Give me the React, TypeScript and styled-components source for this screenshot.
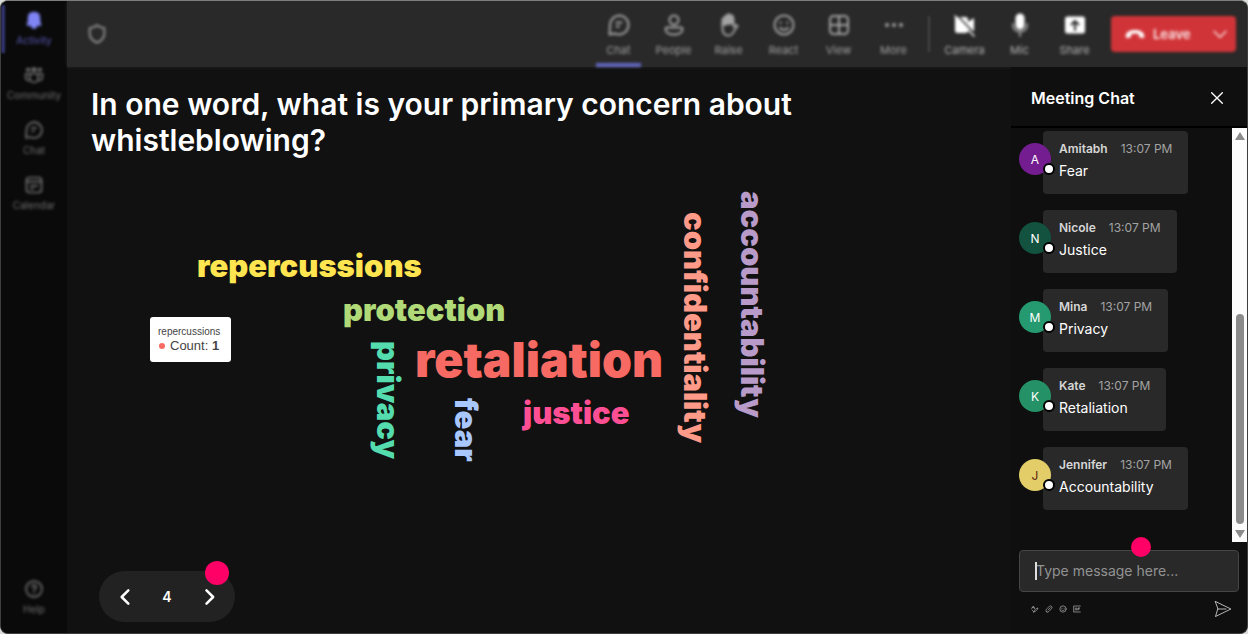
import React from "react";
import styled, { createGlobalStyle, css } from "styled-components";

const GlobalStyle = createGlobalStyle`
  *, *::before, *::after { box-sizing: border-box; }
  body { margin: 0; background: #d9dcd9; font-family: Inter, "Liberation Sans", sans-serif; color: #fff; }
  button { font: inherit; color: inherit; background: none; border: 0; padding: 0; cursor: pointer; }
`;

const softFocus = css`filter: blur(1.5px);`;

const Window = styled.div`
  display: flex;
  height: 100vh;
  border: 1px solid #3c3f3c;
  border-top-color: #7c807c;
  border-radius: 8px;
  background: #111;
  overflow: hidden;
`;

const Rail = styled.nav`
  display: flex;
  flex-direction: column;
  flex: none;
  width: 66px;
  gap: 10px;
  padding: 1px 0 17px;
  background: #0a0a0a;
`;

const RailItem = styled.button<{ $active?: boolean; $last?: boolean }>`
  position: relative;
  display: flex;
  flex-direction: column;
  align-items: center;
  gap: 3px;
  width: 100%;
  height: 45px;
  padding-top: 8px;
  font-size: 10px;
  line-height: 14px;
  color: #707070;
  svg, span { ${softFocus} }
  ${(p) => p.$last && css`margin-top: auto;`}
  ${(p) => p.$active && css`
    color: #5759b4;
    svg { color: #7f85f5; }
    &::before {
      content: "";
      position: absolute;
      left: 0;
      top: 3px;
      width: 4px;
      height: 48px;
      background: #34366f;
      filter: blur(1px);
    }
  `}
`;

const Body = styled.div`
  display: flex;
  flex-direction: column;
  flex: 1;
  min-width: 0;
`;

const Toolbar = styled.header`
  display: flex;
  align-items: center;
  flex: none;
  height: 66px;
  padding: 0 11px 0 19px;
  background: #292929;
  box-shadow: 0 0 3px #292929;
`;

const ShieldSlot = styled.span`
  display: flex;
  margin-right: auto;
  color: #959595;
  ${softFocus}
`;

const Tools = styled.div`
  display: flex;
  gap: 10px;
  height: 100%;
`;

const Tool = styled.button<{ $active?: boolean; $bright?: boolean }>`
  display: flex;
  flex-direction: column;
  align-items: center;
  gap: 6px;
  width: 45px;
  padding-top: 12px;
  font-size: 11px;
  line-height: 14px;
  color: ${(p) => (p.$bright ? "#b4b4b4" : "#a0a0a0")};
  border-bottom: 4px solid ${(p) => (p.$active ? "#6268c2" : "transparent")};
  ${softFocus}
  svg { color: ${(p) => (p.$bright ? "#fff" : "#a3a3a3")}; }
`;

const Divider = styled.span`
  width: 2px;
  height: 36px;
  margin: 0 12px;
  background: #444;
  filter: blur(1px);
`;

const Leave = styled.button`
  display: flex;
  align-items: center;
  gap: 8px;
  width: 125px;
  height: 36px;
  margin-left: 14px;
  padding: 0 8px 0 14px;
  border-radius: 4px;
  background: #d13438;
  font-size: 13px;
  font-weight: 600;
  color: #fbeaea;
  ${softFocus}
  svg:last-child { margin-left: auto; }
`;

const Content = styled.div`
  display: flex;
  flex: 1;
  min-height: 0;
`;

const Stage = styled.main`
  display: flex;
  flex-direction: column;
  flex: 1;
  min-width: 0;
  padding: 19px 24px 11px;
`;

const Question = styled.h1`
  max-width: 760px;
  margin: 0;
  font-size: 30px;
  line-height: 36px;
  font-weight: 600;
`;

const Cloud = styled.section`
  position: relative;
  flex: 1;
`;

const Word = styled.span<{ $x: number; $y: number; $color: string; $size?: number; $down?: boolean }>`
  position: absolute;
  left: ${(p) => p.$x}px;
  top: ${(p) => p.$y}px;
  font-size: ${(p) => p.$size ?? 31}px;
  line-height: 1;
  font-weight: 900;
  white-space: nowrap;
  color: ${(p) => p.$color};
  ${(p) => p.$down && css`writing-mode: vertical-rl;`}
`;

const Tooltip = styled.div`
  position: absolute;
  left: 59px;
  top: 159px;
  width: 81px;
  padding: 8px;
  border-radius: 3px;
  background: #fff;
  color: #444;
  font: 10px/13px "Liberation Sans", Arial, sans-serif;
`;

const Count = styled.div`
  display: flex;
  align-items: center;
  gap: 5px;
  font-size: 13px;
  line-height: 16px;
  white-space: nowrap;
  &::before { content: ""; width: 6px; height: 6px; margin-left: 1px; border-radius: 50%; background: #f76a63; }
`;

const Pager = styled.div`
  position: relative;
  display: flex;
  align-items: center;
  justify-content: space-between;
  align-self: flex-start;
  width: 136px;
  height: 51px;
  margin-left: 8px;
  padding: 0 16px;
  border-radius: 26px;
  background: #222;
  font-size: 14px;
  font-weight: 600;
  button { display: flex; }
`;

const Marker = styled.span<{ $size: number }>`
  position: absolute;
  width: ${(p) => p.$size}px;
  height: ${(p) => p.$size}px;
  border-radius: 50%;
  background: #ff0066;
`;

const PagerMarker = styled(Marker)`
  top: -10px;
  right: 6px;
`;

const InputMarker = styled(Marker)`
  top: -13px;
  left: 51%;
`;

const Chat = styled.aside`
  display: flex;
  flex-direction: column;
  flex: none;
  width: 236px;
  background: #0f0f0f;
`;

const ChatHeader = styled.div`
  display: flex;
  align-items: center;
  justify-content: space-between;
  flex: none;
  height: 61px;
  padding: 2px 22px 0 20px;
  border-bottom: 2px solid #000;
  h2 { margin: 0; font-size: 16px; line-height: 20px; font-weight: 600; }
  button { display: flex; }
`;

const Scroller = styled.div`
  display: flex;
  flex: 1;
  min-height: 0;
`;

const Messages = styled.ul`
  display: flex;
  flex-direction: column;
  flex: 1;
  gap: 16px;
  margin: 0;
  padding: 3px 8px 0;
  list-style: none;
`;

const Message = styled.li`
  display: flex;
  align-items: flex-start;
`;

const Avatar = styled.span<{ $color: string; $ink?: string }>`
  position: relative;
  z-index: 1;
  display: grid;
  place-items: center;
  width: 32px;
  height: 32px;
  margin: 12px -8px 0 0;
  border-radius: 50%;
  background: ${(p) => p.$color};
  color: ${(p) => p.$ink ?? "#fff"};
  font-size: 12px;
  &::after {
    content: "";
    position: absolute;
    right: -4px;
    bottom: 0;
    width: 12px;
    height: 12px;
    border: 2px solid #000;
    border-radius: 50%;
    background: #fff;
  }
`;

const Bubble = styled.div`
  height: 63px;
  padding: 9px 16px;
  border-radius: 4px;
  background: #292929;
  font-size: 14px;
  line-height: 18px;
  p { margin: 4px 0 0; }
`;

const Meta = styled.div`
  display: flex;
  gap: 13px;
  font-size: 12px;
  line-height: 18px;
  color: #a3a3a3;
  strong { font-weight: 600; color: #d6d6d6; }
`;

const Track = styled.div`
  display: flex;
  flex-direction: column;
  align-items: center;
  width: 15px;
  padding: 4px 0;
  background: #fcfcfc;
  color: #8b8b8b;
`;

const Thumb = styled.span`
  width: 8px;
  height: 210px;
  margin: auto 0 6px;
  border-radius: 4px;
  background: #8b8b8b;
`;

const Composer = styled.form`
  flex: none;
  padding: 8px 8px 15px;
`;

const Field = styled.label`
  position: relative;
  display: block;
  &::before {
    content: "";
    position: absolute;
    left: 16px;
    top: 12px;
    width: 2px;
    height: 18px;
    background: #ddd;
  }
  input {
    display: block;
    width: 100%;
    height: 42px;
    padding: 0 16px 2px;
    border: 1px solid #454545;
    border-radius: 4px;
    outline: 0;
    background: #292929;
    color: #fff;
    font: 14px Inter, sans-serif;
  }
  input::placeholder { color: #929292; opacity: 1; }
`;

const Actions = styled.div`
  display: flex;
  align-items: center;
  gap: 6px;
  padding: 8px 7px 0 12px;
  color: #b5b5b5;
  button { display: flex; }
  button:last-child { margin-left: auto; color: #eee; }
`;

type IconProps = { size?: number; stroke?: number; children: React.ReactNode };
const Icon = ({ size = 24, stroke = 2, children }: IconProps) => (
  <svg width={size} height={size} viewBox="0 0 24 24" fill="none" stroke="currentColor" strokeWidth={stroke} strokeLinecap="round" strokeLinejoin="round" aria-hidden="true">
    {children}
  </svg>
);

const glyphs = {
  bell: <path fill="currentColor" d="M12 3c4 0 6.500 2.500 6.500 6.500V14l1.500 4h-5c0 2-1.300 3.500-3 3.500S9 20 9 18H4l1.500-4V9.500C5.500 5.500 8 3 12 3z" />,
  community: (
    <>
      <path fill="currentColor" d="M3.500 4.500h3v2h-3zM10 4h4v3h-4zM17.500 4.500h3v2h-3z" />
      <path d="M7 10.500h10v5.500a5 5 0 0 1-10 0zM7 10.500H2v4.500c0 2.500 2 4 5 3.500M17 10.500h5v4.500c0 2.500-2 4-5 3.500" />
    </>
  ),
  chat: (
    <>
      <path d="M12 2.500a9.500 9.500 0 1 1-4.500 17.900L2.500 21.500l.5-9.500A9.500 9.500 0 0 1 12 2.500z" />
      <path d="M9.500 9.500h5M9.500 13.500h2.500" />
    </>
  ),
  calendar: (
    <>
      <rect x="3" y="3" width="18" height="18" rx="3.500" />
      <path d="M3 8h18M8 13h8M8 16.500h3" />
    </>
  ),
  help: (
    <>
      <circle cx="12" cy="12" r="9.500" />
      <path d="M9.500 9.500a2.500 2.500 0 1 1 3.800 2.200c-1 .6-1.300 1-1.300 2.300M12 17v.2" />
    </>
  ),
  people: (
    <>
      <circle cx="12" cy="7" r="4.500" />
      <path d="M5 14.500h14c1 0 1.500.6 1.500 1.500 0 3.500-3.700 5.500-8.500 5.500S3.500 19.500 3.500 16c0-.9.500-1.500 1.500-1.500z" />
    </>
  ),
  raise: (
    <>
      <path d="M5.500 11v4.500c0 4 2.200 7 6 7 3 0 4.500-2 5.500-4.500l3.500-5c-1-1.200-2.500-1-4 .8V6" />
      <path fill="currentColor" d="M5.500 12V6.500a1.200 1.200 0 0 1 2.400 0V4a1.300 1.300 0 0 1 2.600 0V2.500a1.300 1.300 0 0 1 2.600 0V4a1.300 1.300 0 0 1 2.900 0v6z" />
    </>
  ),
  react: (
    <>
      <circle cx="12" cy="12" r="9.500" />
      <path d="M8.500 9.500v.5M15.500 9.500v.5M8 15c2 2.200 6 2.200 8 0" />
    </>
  ),
  view: (
    <>
      <rect x="3" y="3" width="18" height="18" rx="3.500" />
      <path d="M12 3v18M3 12h18" />
    </>
  ),
  more: <path strokeWidth="4" d="M5 12h.01M12 12h.01M19 12h.01" />,
  camera: (
    <>
      <path fill="currentColor" stroke="none" d="M2 4h10.500a2.500 2.500 0 0 1 2.500 2.500V9l6-4v14l-6-3v1.500a2.500 2.500 0 0 1-2.500 2.500H4.500A2.500 2.500 0 0 1 2 17.500z" />
      <path stroke="#292929" strokeWidth="1.500" d="M4 2l19 20" />
      <path strokeWidth="1.500" d="M2 3l19 20" />
    </>
  ),
  mic: (
    <>
      <rect x="8.500" y="1.500" width="7" height="14" rx="3.500" fill="currentColor" />
      <path stroke="#9a9a9a" d="M5 11c0 5 3 7.500 7 7.500s7-2.500 7-7.500M12 18.500V23" />
    </>
  ),
  share: (
    <>
      <rect x="2" y="3.500" width="20" height="17" rx="2.500" fill="currentColor" stroke="none" />
      <path stroke="#292929" d="M12 17V8M8.500 11.500L12 8l3.500 3.500" />
    </>
  ),
};

type Glyph = keyof typeof glyphs;

const railItems: { icon: Glyph; label: string }[] = [
  { icon: "bell", label: "Activity" },
  { icon: "community", label: "Community" },
  { icon: "chat", label: "Chat" },
  { icon: "calendar", label: "Calendar" },
  { icon: "help", label: "Help" },
];

const meetingTools: { icon: Glyph; label: string }[] = [
  { icon: "chat", label: "Chat" },
  { icon: "people", label: "People" },
  { icon: "raise", label: "Raise" },
  { icon: "react", label: "React" },
  { icon: "view", label: "View" },
  { icon: "more", label: "More" },
];

const deviceTools: { icon: Glyph; label: string }[] = [
  { icon: "camera", label: "Camera" },
  { icon: "mic", label: "Mic" },
  { icon: "share", label: "Share" },
];

const words = [
  { text: "repercussions", x: 106, y: 92, color: "#ffe54f" },
  { text: "protection", x: 252, y: 136, color: "#b0d977" },
  { text: "retaliation", x: 324, y: 178, color: "#f76a63", size: 48 },
  { text: "justice", x: 432, y: 239, color: "#ff4f94" },
  { text: "privacy", x: 282, y: 183, color: "#55dcae", down: true },
  { text: "fear", x: 360, y: 240, color: "#a9c7ff", down: true },
  { text: "confidentiality", x: 589, y: 54, color: "#ff9a88", down: true },
  { text: "accountability", x: 646, y: 33, color: "#b99bc9", down: true },
];

const messages = [
  { name: "Amitabh", text: "Fear", color: "#741d91" },
  { name: "Nicole", text: "Justice", color: "#12523f" },
  { name: "Mina", text: "Privacy", color: "#259a70" },
  { name: "Kate", text: "Retaliation", color: "#259166" },
  { name: "Jennifer", text: "Accountability", color: "#e2cd68", ink: "#5c1f10" },
];

export default function App() {
  return (
    <>
      <GlobalStyle />
      <Window>
        <Rail>
          {railItems.map((item, i) => (
            <RailItem key={item.label} $active={i === 0} $last={item.icon === "help"}>
              <Icon>{glyphs[item.icon]}</Icon>
              <span>{item.label}</span>
            </RailItem>
          ))}
        </Rail>
        <Body>
          <Toolbar>
            <ShieldSlot>
              <Icon size={22}><path d="M12 2.500c2.500 2 5 2.700 8 3v6c0 5-3 8-8 10-5-2-8-5-8-10v-6c3-.3 5.500-1 8-3z" /></Icon>
            </ShieldSlot>
            <Tools>
              {meetingTools.map((tool, i) => (
                <Tool key={tool.label} $active={i === 0}>
                  <Icon>{glyphs[tool.icon]}</Icon>
                  {tool.label}
                </Tool>
              ))}
            </Tools>
            <Divider />
            <Tools>
              {deviceTools.map((tool) => (
                <Tool key={tool.label} $bright>
                  <Icon>{glyphs[tool.icon]}</Icon>
                  {tool.label}
                </Tool>
              ))}
            </Tools>
            <Leave>
              <Icon size={20}><path fill="#fff" stroke="none" d="M1 14c0-9 22-9 22 0v1.500c0 1-.6 1.500-1.500 1.300l-3.500-.6c-.8-.2-1.200-.6-1.300-1.400L16.500 12c-3-1-6-1-9 0l-.2 2.800c-.1.800-.5 1.200-1.300 1.400l-3.500.6C1.600 17 1 16.500 1 15.500z" /></Icon>
              Leave
              <Icon size={16}><path d="M3 8l9 9 9-9" /></Icon>
            </Leave>
          </Toolbar>
          <Content>
            <Stage>
              <Question>In one word, what is your primary concern about whistleblowing?</Question>
              <Cloud>
                {words.map((w) => (
                  <Word key={w.text} $x={w.x} $y={w.y} $color={w.color} $size={w.size} $down={w.down}>{w.text}</Word>
                ))}
                <Tooltip role="tooltip">
                  repercussions
                  <Count><span>Count: <b>1</b></span></Count>
                </Tooltip>
              </Cloud>
              <Pager>
                <button aria-label="Previous"><Icon size={20} stroke={3}><path d="M16 4l-8 8 8 8" /></Icon></button>
                4
                <button aria-label="Next"><Icon size={20} stroke={3}><path d="M9 4l8 8-8 8" /></Icon></button>
                <PagerMarker $size={24} />
              </Pager>
            </Stage>
            <Chat>
              <ChatHeader>
                <h2>Meeting Chat</h2>
                <button aria-label="Close"><Icon size={16} stroke={2}><path d="M4 4l16 16M20 4L4 20" /></Icon></button>
              </ChatHeader>
              <Scroller>
                <Messages>
                  {messages.map((m) => (
                    <Message key={m.name}>
                      <Avatar $color={m.color} $ink={m.ink}>{m.name[0]}</Avatar>
                      <Bubble>
                        <Meta><strong>{m.name}</strong><span>13:07 PM</span></Meta>
                        <p>{m.text}</p>
                      </Bubble>
                    </Message>
                  ))}
                </Messages>
                <Track>
                  <svg width="10" height="8" viewBox="0 0 10 8"><path fill="currentColor" d="M5 0l5 8H0z" /></svg>
                  <Thumb />
                  <svg width="10" height="8" viewBox="0 0 10 8"><path fill="currentColor" d="M0 0h10L5 8z" /></svg>
                </Track>
              </Scroller>
              <Composer>
                <Field>
                  <input type="text" aria-label="Message" placeholder="Type message here..." />
                  <InputMarker $size={20} />
                </Field>
                <Actions>
                  <button type="button" aria-label="Format"><Icon size={8}><path d="M2 10l5-7 4 8M4 8h5M8 21c2-6 8-12 13-12-2 6-7 11-13 12zM3 15l4 4" /></Icon></button>
                  <button type="button" aria-label="Attach"><Icon size={8}><path d="M5 21c-4-3-2-7 1-10l7-7c3-3 10 0 8 5L12 19c-3 3-6 3-7 2zM9 15l7-7" /></Icon></button>
                  <button type="button" aria-label="Emoji"><Icon size={8}>{glyphs.react}</Icon></button>
                  <button type="button" aria-label="GIF"><Icon size={8}><path d="M22 3H2v18h20M7 9v6M11 9v6M15 15V9h5M15 12h4" /></Icon></button>
                  <button type="submit" aria-label="Send"><Icon size={18} stroke={1}><path d="M2 2l20.500 10L2 22l3-10zM5 12h11" /></Icon></button>
                </Actions>
              </Composer>
            </Chat>
          </Content>
        </Body>
      </Window>
    </>
  );
}
